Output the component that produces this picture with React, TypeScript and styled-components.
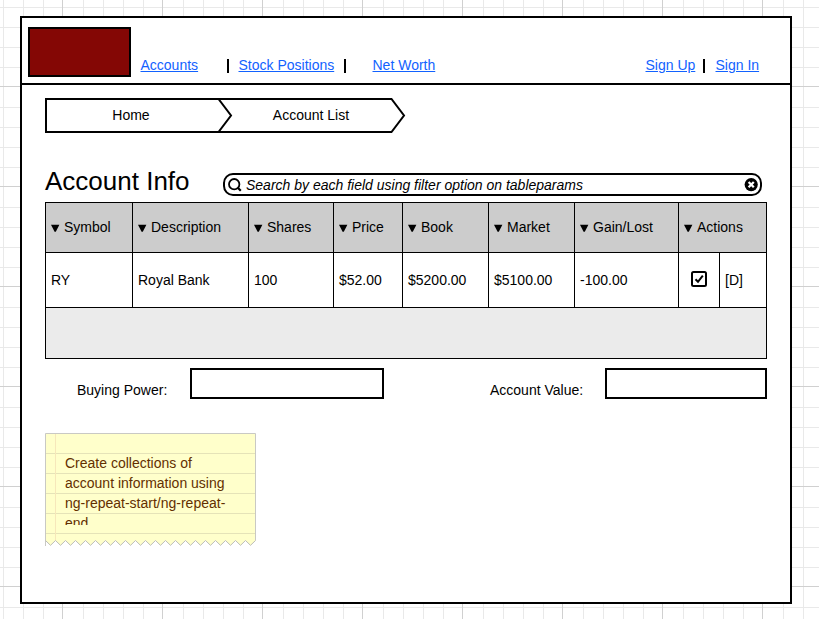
import React from "react";
import styled, { createGlobalStyle } from "styled-components";

const GlobalStyle = createGlobalStyle`
  * { box-sizing: border-box; }
  html, body { margin: 0; padding: 0; overflow: hidden; background: #fff; }
  body {
    font-family: "Liberation Sans", Arial, sans-serif;
    font-size: 14px;
    line-height: 16px;
    color: #000;
  }
`;

const minor = (at: number, dir: string) =>
  `linear-gradient(${dir}, transparent ${at}px, #e9e9e9 ${at}px, #e9e9e9 ${at + 1}px, transparent ${at + 1}px)`;

const major = (dir: string) =>
  `linear-gradient(${dir}, #d0d0d0 1px, transparent 1px)`;

const gridLayers = [
  major("to right"),
  major("to bottom"),
  ...[21, 41, 61, 81].flatMap((n) => [minor(n, "to right"), minor(n, "to bottom")]),
].join(", ");

const Canvas = styled.div`
  width: 819px;
  height: 619px;
  padding: 16px 0 0 20px;
  overflow: hidden;
  background-color: #fff;
  background-image: ${gridLayers};
  background-size: 100px 100px;
  background-position: -38px -14px;
`;

const Frame = styled.main`
  width: 772px;
  height: 588px;
  border: 2px solid #000;
  background: #fff;
`;

const Header = styled.header`
  display: flex;
  height: 67px;
  padding: 9px 31px 0 6px;
  border-bottom: 2px solid #000;
`;

const Logo = styled.div`
  width: 103px;
  height: 50px;
  border: 2px solid #000;
  background: #840705;
`;

const Nav = styled.nav<{ $end?: boolean }>`
  display: flex;
  align-items: flex-start;
  padding-top: 30px;
  margin-left: ${(p) => (p.$end ? "auto" : "9.5px")};
`;

const NavLink = styled.a<{ $w: number }>`
  width: ${(p) => p.$w}px;
  color: #1262ff;
  text-decoration: underline;
  white-space: nowrap;
`;

const Separator = styled.span<{ $gap: number }>`
  width: 2px;
  height: 14px;
  margin: 2px ${(p) => p.$gap}px 0 0;
  background: #000;
`;

const Content = styled.div`
  padding: 13px 23px 0;
`;

const Breadcrumb = styled.nav`
  display: flex;
  height: 35px;
`;

const Crumb = styled.div<{ $shift?: boolean }>`
  position: relative;
  width: 173px;
  height: 35px;
  line-height: 34px;
  text-align: center;
  padding-left: ${(p) => (p.$shift ? "13px" : "0")};
  padding-right: ${(p) => (p.$shift ? "0" : "1px")};

  svg {
    position: absolute;
    left: 0;
    top: 0;
    overflow: visible;
  }
`;

const TitleRow = styled.div`
  display: flex;
  justify-content: space-between;
  height: 69px;
  padding: 33px 5px 0 0;
`;

const Title = styled.h1`
  margin: 0;
  font-size: 26px;
  line-height: 30px;
  font-weight: 400;
  white-space: nowrap;
`;

const Search = styled.div`
  display: flex;
  align-items: center;
  width: 539px;
  height: 23px;
  margin-top: 7px;
  padding: 0 2px 0 3px;
  border: 2px solid #000;
  border-radius: 10px;
  background: #fff;
  font-style: italic;
`;

const SearchText = styled.span`
  flex: 1;
  margin-left: 4px;
  padding-top: 1px;
`;

const Table = styled.div`
  width: 722px;
  border: 1px solid #000;
`;

const Row = styled.div<{ $head?: boolean }>`
  display: grid;
  grid-template-columns: ${(p) =>
    p.$head ? "86px 116px 85px 69px 86px 86px 104px 88px" : "86px 116px 85px 69px 86px 86px 104px 41px 47px"};
  height: ${(p) => (p.$head ? 50 : 55)}px;
  border-bottom: 1px solid #000;
  background: ${(p) => (p.$head ? "#ccc" : "#fff")};
`;

const Cell = styled.div<{ $center?: boolean; $head?: boolean }>`
  display: flex;
  align-items: center;
  justify-content: ${(p) => (p.$center ? "center" : "flex-start")};
  gap: 4px;
  padding-left: ${(p) => (p.$center ? 0 : 5)}px;
  padding-bottom: ${(p) => (p.$head || p.$center ? 2 : 0)}px;
  white-space: nowrap;

  & + & {
    border-left: 1px solid #000;
  }
`;

const TableFooter = styled.div`
  height: 50px;
  background: #ebebeb;
`;

const Totals = styled.div`
  display: flex;
  height: 40px;
  padding: 9px 0 0 32px;
`;

const FieldLabel = styled.label<{ $w: number }>`
  width: ${(p) => p.$w}px;
  padding-top: 14px;
`;

const Field = styled.div<{ $w: number; $gap?: number }>`
  width: ${(p) => p.$w}px;
  height: 31px;
  margin-right: ${(p) => p.$gap ?? 0}px;
  border: 2px solid #000;
  background: #fff;
`;

const Note = styled.aside`
  position: relative;
  width: 211px;
  height: 113px;
  margin-top: 34px;
  padding: 20px 20px 0;

  svg {
    position: absolute;
    left: 0;
    top: 0;
  }
`;

const NoteText = styled.p`
  position: relative;
  margin: 0;
  width: 172px;
  height: 72px;
  line-height: 20px;
  overflow: hidden;
  color: #632f00;
`;

const SortGlyph = styled.svg`
  flex: none;
  margin-top: 2px;
`;

const SortIcon = () => (
  <SortGlyph width="9" height="8" viewBox="0 0 9 8">
    <path d="M0 0.8H8.4L4.8 7.8H3.6Z" fill="#000" />
  </SortGlyph>
);

const MagnifierIcon = () => (
  <svg width="14" height="14" viewBox="0 0 14 14" fill="none" stroke="#000">
    <circle cx="6.2" cy="6.2" r="5.2" strokeWidth="1.8" />
    <path d="M9.8 9.8L12.8 12.8" strokeWidth="2.2" />
  </svg>
);

const ClearIcon = () => (
  <svg width="14" height="14" viewBox="0 0 14 14">
    <circle cx="7.2" cy="6.6" r="6.6" fill="#000" />
    <path d="M4.6 4L9.8 9.2M9.8 4L4.6 9.2" stroke="#fff" strokeWidth="2.3" />
  </svg>
);

const CheckIcon = () => (
  <svg width="16" height="16" viewBox="0 0 16 16" fill="none" stroke="#000" strokeWidth="2">
    <rect x="1" y="1" width="14" height="14" rx="1.5" />
    <path d="M4.5 8.2L7 10.8L11.8 4.6" />
  </svg>
);

const columns = ["Symbol", "Description", "Shares", "Price", "Book", "Market", "Gain/Lost", "Actions"];
const values = ["RY", "Royal Bank", "100", "$52.00", "$5200.00", "$5100.00", "-100.00"];

const tornEdge = Array.from(
  { length: 21 },
  (_, i) => `L${205.5 - i * 10} 112.3 L${200.5 - i * 10} 107.5`,
).join(" ");

const NotePaper = () => (
  <svg width="211" height="113" viewBox="0 0 211 113" fill="none">
    <path d={`M0.5 0.5H210.5V107.5 ${tornEdge}Z`} fill="#ffffcb" />
    <path d="M1 20.5H210M1 40.5H210M1 60.5H210M1 80.5H210M1 100.5H210" stroke="#e5e3b8" />
    <path d="M10.5 1V107.5" stroke="#f6e7ba" />
    <path d="M0.5 113V0.5H210.5V107.5" stroke="#c9c9c4" />
    <path d={`M210.5 107.5 ${tornEdge}`} stroke="#bcbcb6" strokeWidth="1" />
  </svg>
);

export default function App() {
  return (
    <>
      <GlobalStyle />
      <Canvas>
        <Frame>
          <Header>
            <Logo />
            <Nav>
              <NavLink $w={86.5}>Accounts</NavLink>
              <Separator $gap={9.5} />
              <NavLink $w={105.5}>Stock Positions</NavLink>
              <Separator $gap={26.5} />
              <NavLink $w={64}>Net Worth</NavLink>
            </Nav>
            <Nav $end>
              <NavLink $w={57.5}>Sign Up</NavLink>
              <Separator $gap={10.5} />
              <NavLink $w={43.5}>Sign In</NavLink>
            </Nav>
          </Header>
          <Content>
            <Breadcrumb>
              <Crumb>
                <svg width="188" height="35" fill="none" stroke="#000" strokeWidth="2">
                  <path d="M1 1H173.5L186 17.5L173.5 34H1Z" />
                </svg>
                Home
              </Crumb>
              <Crumb $shift>
                <svg width="188" height="35" fill="none" stroke="#000" strokeWidth="2">
                  <path d="M0 1H173.5L186 17.5L173.5 34H0" />
                </svg>
                Account List
              </Crumb>
            </Breadcrumb>
            <TitleRow>
              <Title>Account Info</Title>
              <Search>
                <MagnifierIcon />
                <SearchText>Search by each field using filter option on tableparams</SearchText>
                <ClearIcon />
              </Search>
            </TitleRow>
            <Table>
              <Row $head>
                {columns.map((c) => (
                  <Cell key={c} $head>
                    <SortIcon />
                    {c}
                  </Cell>
                ))}
              </Row>
              <Row>
                {values.map((v) => (
                  <Cell key={v}>{v}</Cell>
                ))}
                <Cell $center>
                  <CheckIcon />
                </Cell>
                <Cell>[D]</Cell>
              </Row>
              <TableFooter />
            </Table>
            <Totals>
              <FieldLabel $w={113}>Buying Power:</FieldLabel>
              <Field $w={194} $gap={106} />
              <FieldLabel $w={115}>Account Value:</FieldLabel>
              <Field $w={162} />
            </Totals>
            <Note>
              <NotePaper />
              <NoteText>Create collections of account information using ng-repeat-start/ng-repeat-end</NoteText>
            </Note>
          </Content>
        </Frame>
      </Canvas>
    </>
  );
}
